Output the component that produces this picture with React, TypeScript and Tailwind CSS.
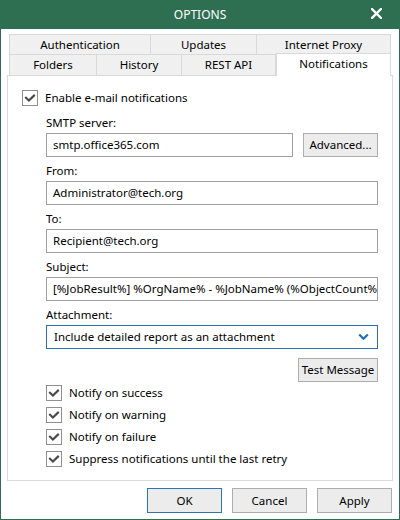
import React from "react";

const Check = () => (
  <div className="w-[16px] h-[16px] border border-[#8f8f8f] bg-white flex items-center justify-center shrink-0">
    <svg width="12" height="12" viewBox="0 0 12 12">
      <path d="M2 5.8 L4.9 8.5 L10 3.6" fill="none" stroke="#4a4a4a" strokeWidth="2.1" strokeLinecap="square" />
    </svg>
  </div>
);

const Tab = ({ label, className = "" }: { label: string; className?: string }) => (
  <div className={`flex items-center justify-center bg-[#f0f0f0] border-t border-l border-[#d9d9d9] ${className}`}>
    {label}
  </div>
);

const Label = ({ children, className = "" }: { children: React.ReactNode; className?: string }) => (
  <div className={`h-[16px] leading-[16px] ${className}`}>{children}</div>
);

const Field = ({ text, className = "" }: { text: string; className?: string }) => (
  <div className={`h-[24px] border border-[#a0a0a0] bg-white flex items-center px-[6px] overflow-hidden whitespace-nowrap ${className}`}>
    {text}
  </div>
);

const Btn = ({ label, className = "" }: { label: string; className?: string }) => (
  <div className={`h-[24px] border border-[#adadad] bg-[#ececec] flex items-center justify-center ${className}`}>
    {label}
  </div>
);

const CheckRow = ({ label }: { label: string }) => (
  <div className="h-[22px] flex items-center gap-[7px]">
    <Check />
    <span>{label}</span>
  </div>
);

export default function App() {
  return (
    <div className="w-[400px] h-[520px] bg-white border-x border-b border-[#2e6f52] flex flex-col font-['Noto_Sans',sans-serif] text-[11.5px] text-black">
      <div className="h-[29px] shrink-0 bg-[#2e6f52] relative flex items-center justify-center text-white text-[12px]">
        OPTIONS
        <svg className="absolute right-[17px] top-[8px]" width="11" height="11" viewBox="0 0 11 11">
          <path d="M1 1 L10 10 M10 1 L1 10" stroke="#ffffff" strokeWidth="2.4" strokeLinecap="square" />
        </svg>
      </div>

      <div className="px-[6px] pt-[5px] flex flex-col">
        <div className="px-[2px] flex flex-col">
          <div className="h-[20px] flex">
            <Tab label="Authentication" className="w-[141px]" />
            <Tab label="Updates" className="w-[106px]" />
            <Tab label="Internet Proxy" className="flex-1 border-r" />
          </div>
          <div className="h-[21px] flex items-start">
            <Tab label="Folders" className="w-[87px] h-[21px]" />
            <Tab label="History" className="w-[85px] h-[21px]" />
            <Tab label="REST API" className="w-[95px] h-[21px] border-r" />
            <div className="flex-1 -mt-px h-[23px] relative z-10 bg-white border-x border-t border-[#d9d9d9] flex justify-center pt-[2px] leading-[16px]">
              Notifications
            </div>
          </div>
        </div>

        <div className="h-[406px] border border-[#d9d9d9] bg-white pl-[14px] pr-[14px] pt-[14px] flex flex-col">
          <div className="h-[16px] flex items-center gap-[7px]">
            <Check />
            <span>Enable e-mail notifications</span>
          </div>

          <div className="ml-[24px] flex flex-col">
            <Label className="mt-[9px]">SMTP server:</Label>
            <div className="mt-[2px] flex gap-[10px]">
              <Field text="smtp.office365.com" className="flex-1" />
              <Btn label="Advanced..." className="w-[75px]" />
            </div>

            <Label className="mt-[6px]">From:</Label>
            <Field text="Administrator@tech.org" className="mt-[2px]" />

            <Label className="mt-[6px]">To:</Label>
            <Field text="Recipient@tech.org" className="mt-[2px]" />

            <Label className="mt-[6px]">Subject:</Label>
            <Field text="[%JobResult%] %OrgName% - %JobName% (%ObjectCount% objects)" className="mt-[2px]" />

            <Label className="mt-[6px]">Attachment:</Label>
            <div className="mt-[2px] h-[24px] border border-[#2a6fb6] bg-white flex items-center justify-between pl-[7px] pr-[8px]">
              <span>Include detailed report as an attachment</span>
              <svg width="11" height="8" viewBox="0 0 11 8">
                <path d="M1.2 1.5 L5.5 5.8 L9.8 1.5" fill="none" stroke="#1f6fbf" strokeWidth="2.2" />
              </svg>
            </div>

            <div className="mt-[9px] flex justify-end">
              <Btn label="Test Message" className="w-[80px]" />
            </div>

            <div className="flex flex-col">
              <CheckRow label="Notify on success" />
              <CheckRow label="Notify on warning" />
              <CheckRow label="Notify on failure" />
              <CheckRow label="Suppress notifications until the last retry" />
            </div>
          </div>
        </div>
      </div>

      <div className="mt-[7px] pr-[7px] flex justify-end gap-[10px]">
        <div className="w-[75px] h-[25px] border border-[#2f73b5] bg-[#ececec] flex items-center justify-center">OK</div>
        <div className="w-[75px] h-[25px] border border-[#adadad] bg-[#ececec] flex items-center justify-center">Cancel</div>
        <div className="w-[75px] h-[25px] border border-[#adadad] bg-[#ececec] flex items-center justify-center">Apply</div>
      </div>
    </div>
  );
}
